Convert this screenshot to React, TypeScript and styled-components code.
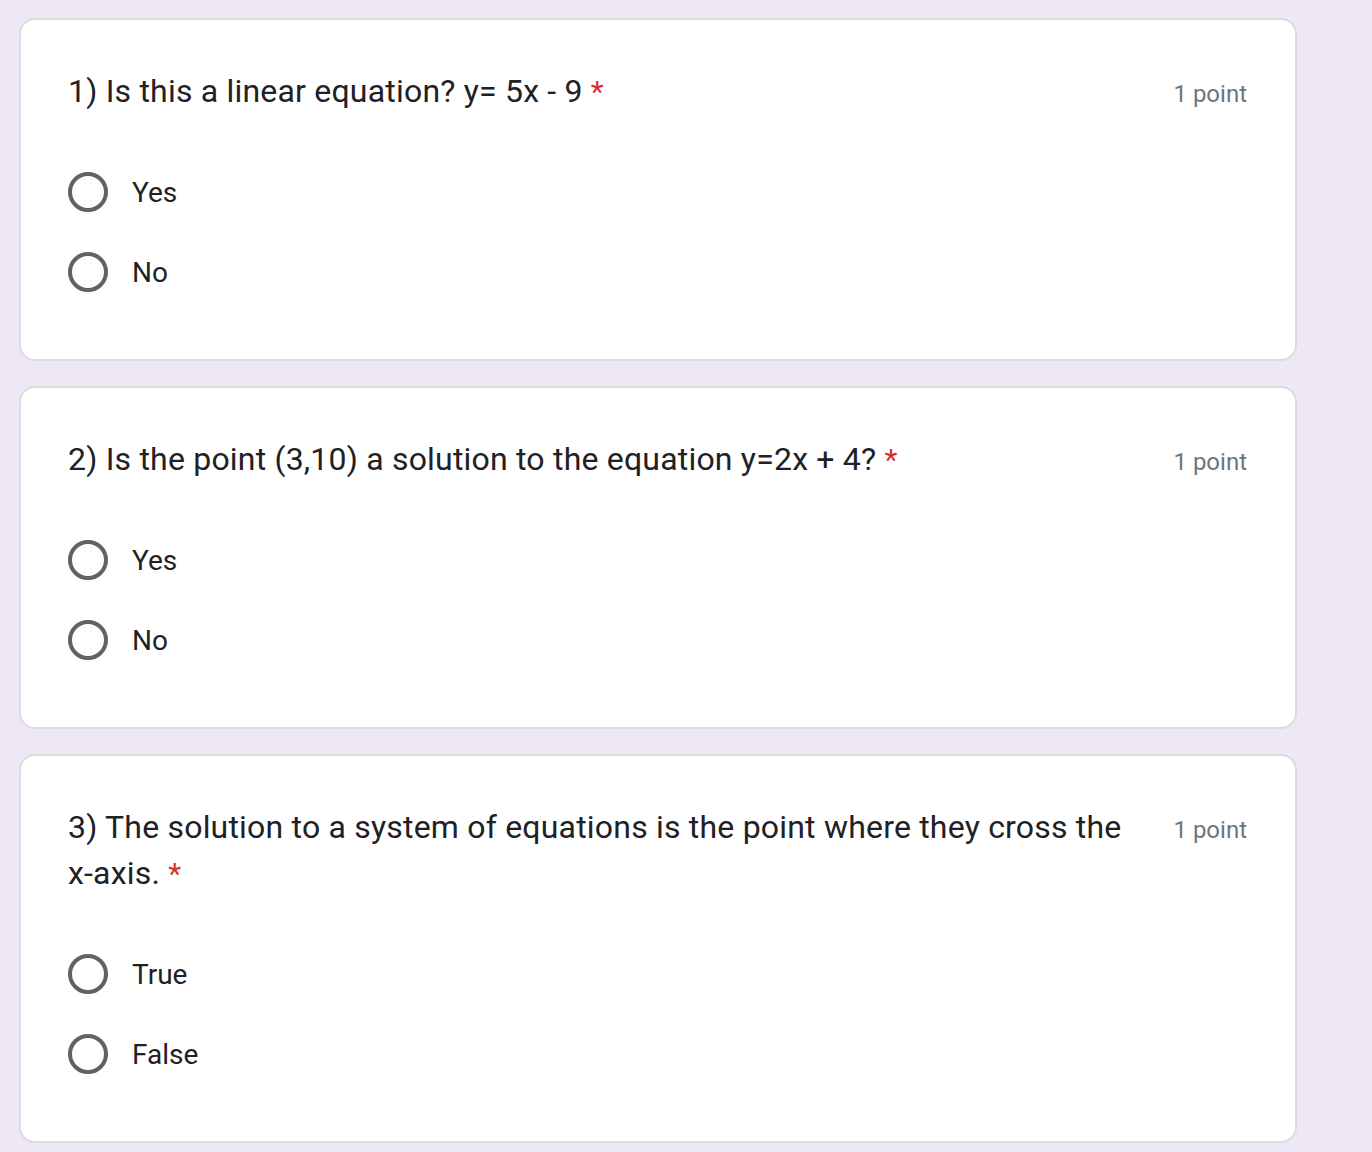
import { FC } from "react";
import styled, { createGlobalStyle } from "styled-components";

const GlobalStyle = createGlobalStyle`
  html, body {
    margin: 0;
    padding: 0;
    background: #ede7f6;
  }
  body {
    font-family: Roboto, "Liberation Sans", Arial, sans-serif;
    -webkit-font-smoothing: antialiased;
  }
`;

const Page = styled.div`
  display: flex;
  flex-direction: column;
  gap: 25px;
  width: 1278px;
  padding: 18px 0 0 19px;
  min-height: 1152px;
`;

const Card = styled.div`
  background: #fff;
  border: 2px solid #dadce0;
  border-radius: 16px;
  padding: 48px 48px 47px 47px;
`;

const Header = styled.div`
  display: flex;
  align-items: baseline;
  gap: 48px;
`;

const Title = styled.div`
  flex: 1;
  font-family: Roboto, "Liberation Sans", sans-serif;
  font-size: 32px;
  line-height: 46px;
  color: #202124;
  letter-spacing: 0.2px;
`;

const Required = styled.span`
  color: #d93025;
  margin-left: 8px;
  font-size: 30px;
`;

const Points = styled.div`
  font-family: Roboto, "Liberation Sans", sans-serif;
  font-size: 24px;
  color: #70757a;
  white-space: nowrap;
`;

const Options = styled.div`
  display: flex;
  flex-direction: column;
  margin-top: 37px;
`;

const Option = styled.label`
  display: flex;
  align-items: center;
  gap: 24px;
  height: 80px;
  font-family: Roboto, "Liberation Sans", sans-serif;
  font-size: 28px;
  color: #202124;
`;

const Radio = styled.span`
  width: 40px;
  height: 40px;
  box-sizing: border-box;
  border: 4px solid #5f6368;
  border-radius: 50%;
  flex-shrink: 0;
`;

interface Question {
  title: string;
  options: string[];
}

const questions: Question[] = [
  { title: "1) Is this a linear equation? y= 5x - 9", options: ["Yes", "No"] },
  {
    title: "2) Is the point (3,10) a solution to the equation y=2x + 4?",
    options: ["Yes", "No"],
  },
  {
    title:
      "3) The solution to a system of equations is the point where they cross the x-axis.",
    options: ["True", "False"],
  },
];

const QuestionCard: FC<{ question: Question }> = ({ question }) => (
  <Card>
    <Header>
      <Title>
        {question.title}
        <Required>*</Required>
      </Title>
      <Points>1 point</Points>
    </Header>
    <Options>
      {question.options.map((opt) => (
        <Option key={opt}>
          <Radio />
          {opt}
        </Option>
      ))}
    </Options>
  </Card>
);

const App: FC = () => (
  <>
    <GlobalStyle />
    <Page>
      {questions.map((q, i) => (
        <QuestionCard key={i} question={q} />
      ))}
    </Page>
  </>
);

export default App;
